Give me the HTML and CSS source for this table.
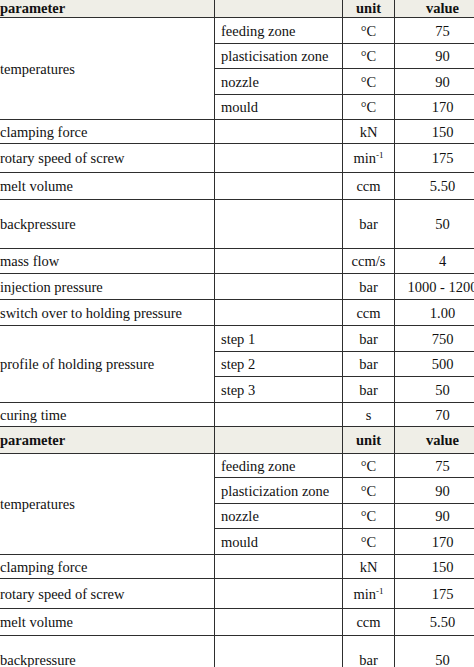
FILE: index.html
```html
<!DOCTYPE html>
<html>
<head>
<meta charset="utf-8">
<link rel="stylesheet" href="styles.css">
</head>
<body>
<table class="params">
<colgroup><col class="c1"><col class="c2"><col class="c3"><col class="c4"></colgroup>
<tbody>
<tr class="head h-first"><th class="name">parameter</th><th></th><th>unit</th><th>value</th></tr>
<tr class="r26"><td class="name" rowspan="4">temperatures</td><td class="sub">feeding zone</td><td class="u">°C</td><td class="v">75</td></tr>
<tr class="r25"><td class="sub">plasticisation zone</td><td class="u">°C</td><td class="v">90</td></tr>
<tr class="r26"><td class="sub">nozzle</td><td class="u">°C</td><td class="v">90</td></tr>
<tr class="r25"><td class="sub">mould</td><td class="u">°C</td><td class="v">170</td></tr>
<tr class="r24"><td class="name">clamping force</td><td></td><td class="u">kN</td><td class="v">150</td></tr>
<tr class="r29"><td class="name">rotary speed of screw</td><td></td><td class="u">min<sup>-1</sup></td><td class="v">175</td></tr>
<tr class="r27"><td class="name">melt volume</td><td></td><td class="u">ccm</td><td class="v">5.50</td></tr>
<tr class="r49"><td class="name">backpressure</td><td></td><td class="u">bar</td><td class="v">50</td></tr>
<tr class="r25"><td class="name">mass flow</td><td></td><td class="u">ccm/s</td><td class="v">4</td></tr>
<tr class="r26"><td class="name">injection pressure</td><td></td><td class="u">bar</td><td class="v">1000 - 1200</td></tr>
<tr class="r26"><td class="name">switch over to holding pressure</td><td></td><td class="u">ccm</td><td class="v">1.00</td></tr>
<tr class="r26"><td class="name" rowspan="3">profile of holding pressure</td><td class="sub">step 1</td><td class="u">bar</td><td class="v">750</td></tr>
<tr class="r25"><td class="sub">step 2</td><td class="u">bar</td><td class="v">500</td></tr>
<tr class="r26"><td class="sub">step 3</td><td class="u">bar</td><td class="v">50</td></tr>
<tr class="r24"><td class="name">curing time</td><td></td><td class="u">s</td><td class="v">70</td></tr>
<tr class="head r27"><th class="name">parameter</th><th></th><th>unit</th><th>value</th></tr>
<tr class="r24"><td class="name" rowspan="4">temperatures</td><td class="sub">feeding zone</td><td class="u">°C</td><td class="v">75</td></tr>
<tr class="r26"><td class="sub">plasticization zone</td><td class="u">°C</td><td class="v">90</td></tr>
<tr class="r25"><td class="sub">nozzle</td><td class="u">°C</td><td class="v">90</td></tr>
<tr class="r26"><td class="sub">mould</td><td class="u">°C</td><td class="v">170</td></tr>
<tr class="r24"><td class="name">clamping force</td><td></td><td class="u">kN</td><td class="v">150</td></tr>
<tr class="r30"><td class="name">rotary speed of screw</td><td></td><td class="u">min<sup>-1</sup></td><td class="v">175</td></tr>
<tr class="r27"><td class="name">melt volume</td><td></td><td class="u">ccm</td><td class="v">5.50</td></tr>
<tr class="r49"><td class="name">backpressure</td><td></td><td class="u">bar</td><td class="v">50</td></tr>
</tbody>
</table>
</body>
</html>
```

FILE: styles.css
```css
html, body {
  margin: 0;
  padding: 0;
  background: #ffffff;
  overflow: hidden;
}
body {
  width: 474px;
  height: 667px;
}
.params {
  border-collapse: collapse;
  table-layout: fixed;
  width: 496px;
  margin-left: -6px;
  margin-top: -3px;
  font-family: "Liberation Serif", "Times New Roman", serif;
  font-size: 14.5px;
  color: #111111;
}
.c1 { width: 220px; }
.c2 { width: 128px; }
.c3 { width: 52px; }
.c4 { width: 96px; }
.params td, .params th {
  border: 1px solid #2e2e2e;
  padding: 0;
  vertical-align: middle;
  line-height: 16px;
  white-space: nowrap;
  overflow: hidden;
}
.params th {
  font-weight: bold;
  text-align: center;
}
.params .name {
  text-align: left;
  padding-left: 5px;
}
.params .sub {
  padding-left: 6px;
}
.params .u, .params .v {
  text-align: center;
}
.head th {
  background: #efeee7;
}
.h-first { height: 20px; }
.r24 { height: 24px; }
.r25 { height: 25px; }
.r26 { height: 26px; }
.r27 { height: 27px; }
.r29 { height: 29px; }
.r30 { height: 30px; }
.r49 { height: 49px; }
sup {
  font-size: 9px;
  line-height: 0;
  vertical-align: 5px;
}
```
